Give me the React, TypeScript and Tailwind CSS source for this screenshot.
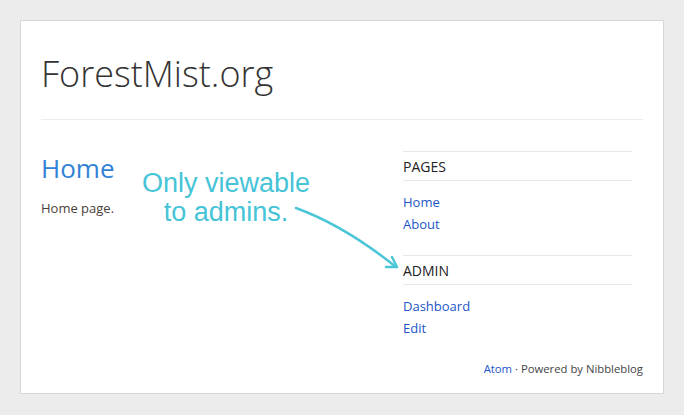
import React from "react";

const sidebar = [
  { title: "PAGES", links: ["Home", "About"] },
  { title: "ADMIN", links: ["Dashboard", "Edit"] },
];

const Widget = ({ title, links, last }: { title: string; links: string[]; last?: boolean }) => (
  <div className={last ? "" : "mb-5"}>
    <h3 className="border-y border-[#e8e8e8] pt-[5px] pb-[4px] text-[14px] leading-[19px] text-[#222]">{title}</h3>
    <ul className="mt-[10px]">
      {links.map((l) => (
        <li key={l} className="text-[13px] leading-[22px] text-[#1c56c8]">
          <a href="#">{l}</a>
        </li>
      ))}
    </ul>
  </div>
);

export default function App() {
  return (
    <div className="relative w-[684px] h-[415px] bg-[#ececec] pt-5 pl-5 font-['Open_Sans',sans-serif]">
      <div className="w-[644px] h-[374px] bg-white border border-[#d6d6d6] pl-[20px] pr-[20px]">
        <header className="pt-[27px] pb-[19px] border-b border-[#ececec]">
          <h1 className="text-[36px] leading-[52px] font-light text-[#333]">ForestMist.org</h1>
        </header>
        <div className="flex pt-[30px]">
          <main className="flex-1">
            <h2 className="text-[26px] leading-[37px] text-[#3282d6]">Home</h2>
            <p className="mt-[12px] text-[13px] leading-[18px] text-[#4a3f3a]">Home page.</p>
          </main>
          <aside className="w-[229px] mr-[11px] mt-[1px]">
            {sidebar.map((w, i) => (
              <Widget key={w.title} title={w.title} links={w.links} last={i === sidebar.length - 1} />
            ))}
          </aside>
        </div>
        <footer className="mt-[22px] text-right text-[11.3px] leading-[16px] text-[#444]">
          <a href="#" className="text-[#1c56c8]">Atom</a> · Powered by Nibbleblog
        </footer>
      </div>

      <div className="absolute left-[126px] top-[169px] w-[200px] text-center text-[27px] leading-[29px] text-[#45c4d7] font-['Liberation_Sans',Arial,sans-serif]">
        Only viewable
        <br />
        to admins.
      </div>
      <svg className="absolute left-0 top-0" width="684" height="415" viewBox="0 0 684 415" fill="none">
        <path d="M296 208 Q345 226 396 267" stroke="#4cc6d6" strokeWidth="2.5" strokeLinecap="round" />
        <path d="M386 267 L397 267 L392 257" stroke="#4cc6d6" strokeWidth="2.5" strokeLinecap="round" strokeLinejoin="round" />
      </svg>
    </div>
  );
}
